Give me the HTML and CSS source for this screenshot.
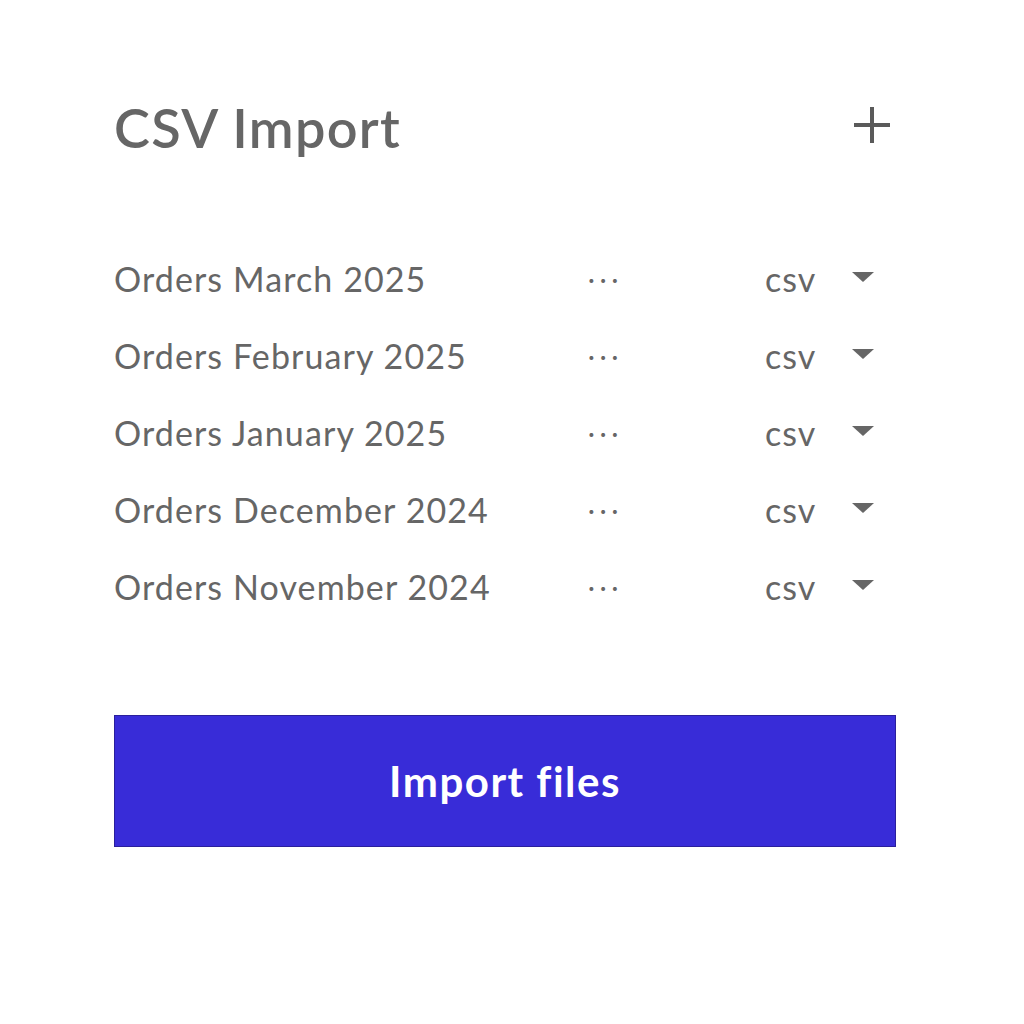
FILE: index.html
```html
<!DOCTYPE html>
<html>
<head>
<meta charset="utf-8">
<link rel="stylesheet" href="styles.css">
</head>
<body>
<div class="panel">
  <div class="header">
    <h1 class="title">CSV Import</h1>
    <svg class="plus" width="40" height="40" viewBox="0 0 40 40"><path d="M20 2V38M2 20H38" stroke="#5a5a5a" stroke-width="4"/></svg>
  </div>
  <ul class="list">
    <li class="row"><span class="name">Orders March 2025</span><span class="dots">···</span><span class="type">csv</span><span class="caret"></span></li>
    <li class="row"><span class="name">Orders February 2025</span><span class="dots">···</span><span class="type">csv</span><span class="caret"></span></li>
    <li class="row"><span class="name">Orders January 2025</span><span class="dots">···</span><span class="type">csv</span><span class="caret"></span></li>
    <li class="row"><span class="name">Orders December 2024</span><span class="dots">···</span><span class="type">csv</span><span class="caret"></span></li>
    <li class="row"><span class="name">Orders November 2024</span><span class="dots">···</span><span class="type">csv</span><span class="caret"></span></li>
  </ul>
  <button class="import">Import files</button>
</div>
</body>
</html>
```
FILE: styles.css
```css
* { box-sizing: border-box; }
html, body { margin: 0; padding: 0; background: #fff; }
body { font-family: Lato, "Open Sans", sans-serif; color: #666; }
.panel { width: 782px; margin-left: 114px; padding-top: 96px; }
.header { display: flex; justify-content: space-between; align-items: center; height: 64px; }
.title { margin: 0; font-size: 54px; font-weight: 600; color: #666; letter-spacing: 1.3px; line-height: 64px; }
.plus { margin-right: 4px; margin-top: -6px; }
.list { list-style: none; margin: 80px 0 0 0; padding: 0; }
.row { display: flex; align-items: center; height: 77px; font-size: 34px; }
.name { width: 474px; letter-spacing: 1.1px; }
.dots { width: 177px; font-size: 26px; letter-spacing: 5px; color: #666; }
.type { width: 87px; letter-spacing: 1px; }
.caret { width: 0; height: 0; border-left: 11px solid transparent; border-right: 11px solid transparent; border-top: 10px solid #666; margin-top: -4px; }
.import { display: block; width: 782px; height: 132px; margin-top: 90px; background: #382cd8; border: 1px solid #2a1f9c; color: #fff; font-family: Lato, sans-serif; font-size: 42px; font-weight: 700; letter-spacing: 1.5px; padding: 0; }
```
